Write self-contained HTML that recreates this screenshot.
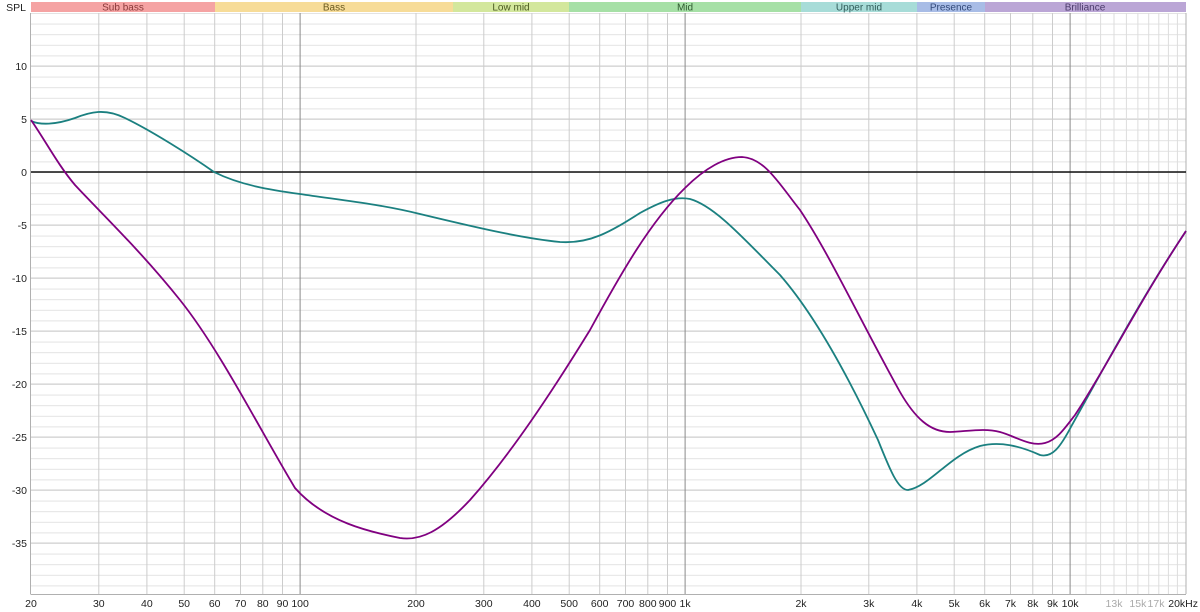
<!DOCTYPE html>
<html><head><meta charset="utf-8"><style>
html,body{margin:0;padding:0;background:#fff;width:1200px;height:612px;overflow:hidden}
svg{display:block;font-family:"Liberation Sans",sans-serif}
</style></head><body>
<svg width="1200" height="612" viewBox="0 0 1200 612" xmlns="http://www.w3.org/2000/svg">
<defs>
<pattern id="hg" x="0" y="172" width="1200" height="10.6" patternUnits="userSpaceOnUse">
<line x1="0" y1="0.5" x2="1200" y2="0.5" stroke="#e2e2e2" stroke-width="1"/>
</pattern>
</defs>
<rect x="31" y="13" width="1155" height="581" fill="url(#hg)"/>
<g stroke="#cfcfcf" stroke-width="1">
<line x1="31" y1="66" x2="1186" y2="66"/><line x1="31" y1="119" x2="1186" y2="119"/>
<line x1="31" y1="225" x2="1186" y2="225"/><line x1="31" y1="278" x2="1186" y2="278"/>
<line x1="31" y1="331" x2="1186" y2="331"/><line x1="31" y1="384" x2="1186" y2="384"/>
<line x1="31" y1="437" x2="1186" y2="437"/><line x1="31" y1="490" x2="1186" y2="490"/>
<line x1="31" y1="543" x2="1186" y2="543"/>
</g>
<g stroke="#cccccc" stroke-width="1">
<line x1="98.8" y1="13" x2="98.8" y2="594"/><line x1="146.9" y1="13" x2="146.9" y2="594"/>
<line x1="184.2" y1="13" x2="184.2" y2="594"/><line x1="214.7" y1="13" x2="214.7" y2="594"/>
<line x1="240.5" y1="13" x2="240.5" y2="594"/><line x1="262.8" y1="13" x2="262.8" y2="594"/>
<line x1="282.5" y1="13" x2="282.5" y2="594"/>
<line x1="416" y1="13" x2="416" y2="594"/><line x1="483.8" y1="13" x2="483.8" y2="594"/>
<line x1="531.9" y1="13" x2="531.9" y2="594"/><line x1="569.2" y1="13" x2="569.2" y2="594"/>
<line x1="599.7" y1="13" x2="599.7" y2="594"/><line x1="625.5" y1="13" x2="625.5" y2="594"/>
<line x1="647.8" y1="13" x2="647.8" y2="594"/><line x1="667.5" y1="13" x2="667.5" y2="594"/>
<line x1="801" y1="13" x2="801" y2="594"/><line x1="868.8" y1="13" x2="868.8" y2="594"/>
<line x1="916.9" y1="13" x2="916.9" y2="594"/><line x1="954.2" y1="13" x2="954.2" y2="594"/>
<line x1="984.7" y1="13" x2="984.7" y2="594"/><line x1="1010.5" y1="13" x2="1010.5" y2="594"/>
<line x1="1032.8" y1="13" x2="1032.8" y2="594"/><line x1="1052.5" y1="13" x2="1052.5" y2="594"/>
</g>
<g stroke="#dddddd" stroke-width="1">
<line x1="1086" y1="13" x2="1086" y2="594"/><line x1="1100.6" y1="13" x2="1100.6" y2="594"/>
<line x1="1114" y1="13" x2="1114" y2="594"/><line x1="1126.4" y1="13" x2="1126.4" y2="594"/>
<line x1="1137.9" y1="13" x2="1137.9" y2="594"/><line x1="1148.7" y1="13" x2="1148.7" y2="594"/>
<line x1="1158.8" y1="13" x2="1158.8" y2="594"/><line x1="1168.4" y1="13" x2="1168.4" y2="594"/>
<line x1="1177.4" y1="13" x2="1177.4" y2="594"/>
</g>
<g stroke="#8a8a8a" stroke-width="1">
<line x1="300.1" y1="13" x2="300.1" y2="594"/><line x1="685.1" y1="13" x2="685.1" y2="594"/>
<line x1="1070.1" y1="13" x2="1070.1" y2="594"/>
</g>
<g stroke="#b0b0b0" stroke-width="1" fill="none">
<line x1="30.5" y1="13" x2="30.5" y2="594"/><line x1="30.5" y1="594.5" x2="1186" y2="594.5"/>
<line x1="1186" y1="13" x2="1186" y2="594"/>
</g>
<line x1="31" y1="172" x2="1186" y2="172" stroke="#111" stroke-width="1.5"/>
<g font-size="10" text-anchor="middle" fill="#444">
<rect x="31" y="2" width="184" height="10" fill="#f5a3a3"/><text x="123" y="10.5" fill="#8a3a3a">Sub bass</text>
<rect x="215" y="2" width="238" height="10" fill="#f7dc98"/><text x="334" y="10.5" fill="#6a5a20">Bass</text>
<rect x="453" y="2" width="116" height="10" fill="#d3e79c"/><text x="511" y="10.5" fill="#4a5a20">Low mid</text>
<rect x="569" y="2" width="232" height="10" fill="#a6e0a6"/><text x="685" y="10.5" fill="#2f5a2f">Mid</text>
<rect x="801" y="2" width="116" height="10" fill="#a7dcd8"/><text x="859" y="10.5" fill="#2f5a58">Upper mid</text>
<rect x="917" y="2" width="68" height="10" fill="#a8bce6"/><text x="951" y="10.5" fill="#334a7a">Presence</text>
<rect x="985" y="2" width="201" height="10" fill="#bba6d6"/><text x="1085" y="10.5" fill="#4a3a6a">Brilliance</text>
</g>
<g font-size="10.5" text-anchor="end" fill="#222">
<text x="26" y="11">SPL</text>
<text x="27" y="70">10</text><text x="27" y="123">5</text><text x="27" y="176">0</text>
<text x="27" y="229">-5</text><text x="27" y="282">-10</text><text x="27" y="335">-15</text>
<text x="27" y="388">-20</text><text x="27" y="441">-25</text><text x="27" y="494">-30</text>
<text x="27" y="547">-35</text>
</g>
<g font-size="10.5" text-anchor="middle" fill="#222">
<text x="31" y="607">20</text><text x="98.8" y="607">30</text><text x="146.9" y="607">40</text>
<text x="184.2" y="607">50</text><text x="214.7" y="607">60</text><text x="240.5" y="607">70</text>
<text x="262.8" y="607">80</text><text x="282.5" y="607">90</text><text x="300.1" y="607">100</text>
<text x="416" y="607">200</text><text x="483.8" y="607">300</text><text x="531.9" y="607">400</text>
<text x="569.2" y="607">500</text><text x="599.7" y="607">600</text><text x="625.5" y="607">700</text>
<text x="647.8" y="607">800</text><text x="667.5" y="607">900</text><text x="685.1" y="607">1k</text>
<text x="801" y="607">2k</text><text x="868.8" y="607">3k</text><text x="916.9" y="607">4k</text>
<text x="954.2" y="607">5k</text><text x="984.7" y="607">6k</text><text x="1010.5" y="607">7k</text>
<text x="1032.8" y="607">8k</text><text x="1052.5" y="607">9k</text><text x="1070.1" y="607">10k</text>
<text x="1114" y="607" fill="#aaa">13k</text><text x="1137.9" y="607" fill="#aaa">15k</text>
<text x="1156" y="607" fill="#aaa">17k</text><text x="1198" y="607" text-anchor="end">20kHz</text>
</g>
<path fill="none" stroke="#1b8080" stroke-width="1.8" stroke-linejoin="round"
d="M31,121 C40,125 55,125 75,118 C90,112 105,108 125,118 C150,130 190,155 214,172 C240,185 270,190 300,194 C340,200 380,204 420,214 C470,226 520,238 560,242 C590,244 610,232 640,213 C660,202 675,196 690,199 C715,206 745,240 780,275 C815,315 850,380 878,440 C890,470 898,490 908,490 C930,486 950,455 980,446 C1000,441 1020,446 1040,455 C1052,458 1060,448 1072,425 C1100,375 1140,300 1186,231"/>
<path fill="none" stroke="#800080" stroke-width="1.8" stroke-linejoin="round"
d="M31,120 C45,140 58,165 75,185 C100,212 140,250 180,300 C220,350 260,430 295,488 C325,522 370,532 400,538 C420,541 440,532 470,500 C510,455 550,395 590,330 C620,275 650,222 685,188 C705,168 725,157 742,157 C765,158 780,185 800,210 C830,255 860,320 900,392 C915,418 930,432 950,432 C970,431 985,428 1000,432 C1015,436 1030,447 1045,443 C1057,440 1065,428 1075,415 C1105,370 1140,300 1186,231"/>
</svg>
</body></html>
